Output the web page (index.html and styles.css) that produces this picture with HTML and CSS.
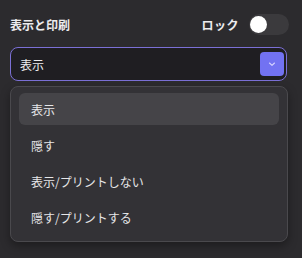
FILE: index.html
```html
<!DOCTYPE html>
<html lang="ja">
<head>
<meta charset="utf-8">
<link rel="stylesheet" href="styles.css">
</head>
<body>
<div class="panel">
  <div class="header">
    <span class="title">表示と印刷</span>
    <div class="lock">
      <span class="lock-label">ロック</span>
      <span class="toggle"><span class="knob"></span></span>
    </div>
  </div>
  <div class="select">
    <span class="select-value">表示</span>
    <span class="chev">
      <svg width="8" height="6" viewBox="0 0 8 6"><polyline points="1.5,2 4,4.3 6.5,2" fill="none" stroke="#d6d4ff" stroke-width="1.1" stroke-linecap="round" stroke-linejoin="round"/></svg>
    </span>
  </div>
  <div class="menu">
    <div class="item active">表示</div>
    <div class="item">隠す</div>
    <div class="item">表示/プリントしない</div>
    <div class="item">隠す/プリントする</div>
  </div>
</div>
</body>
</html>
```
FILE: styles.css
```css
html, body {
  margin: 0;
  padding: 0;
  background: #2c2b2e;
}
body {
  font-family: "Noto Sans CJK JP", "Noto Sans", sans-serif;
  color: #ececee;
  width: 302px;
  height: 258px;
  overflow: hidden;
}
.panel {
  padding: 13px 15px 0 10px;
}
.header {
  display: flex;
  justify-content: space-between;
  align-items: center;
  height: 22px;
}
.title {
  font-size: 12px;
  font-weight: 700;
  padding-top: 0;
}
.lock {
  display: flex;
  align-items: center;
  gap: 10px;
}
.lock-label {
  font-size: 12px;
  font-weight: 700;
  letter-spacing: 0.5px;
}
.toggle {
  width: 40px;
  height: 21px;
  border-radius: 11px;
  background: #3b3a3d;
  display: flex;
  align-items: center;
  padding-left: 1px;
  box-sizing: border-box;
  margin-right: -2px;
}
.knob {
  width: 17px;
  height: 17px;
  border-radius: 50%;
  background: #ffffff;
}
.select {
  margin-top: 12px;
  height: 34px;
  box-sizing: border-box;
  border: 1px solid #7b70d6;
  border-radius: 8px;
  background: #1f1e22;
  display: flex;
  align-items: center;
  justify-content: space-between;
  padding: 0 2px 0 9px;
}
.select-value {
  font-size: 12px;
}
.chev {
  width: 24px;
  height: 24px;
  border-radius: 4px;
  background: #7272f2;
  display: flex;
  align-items: center;
  justify-content: center;
}
.menu {
  margin-top: 5px;
  margin-right: -1px;
  border: 1px solid #4a494d;
  border-radius: 8px;
  background: #333236;
  padding: 6px 8px 8px 8px;
  display: flex;
  flex-direction: column;
  gap: 4px;
  box-shadow: 0 4px 10px rgba(0, 0, 0, 0.35);
}
.item {
  height: 32px;
  display: flex;
  align-items: center;
  padding-left: 12px;
  border-radius: 6px;
  font-size: 12px;
  color: #e6e6e8;
}
.item.active {
  background: #454448;
}
```
